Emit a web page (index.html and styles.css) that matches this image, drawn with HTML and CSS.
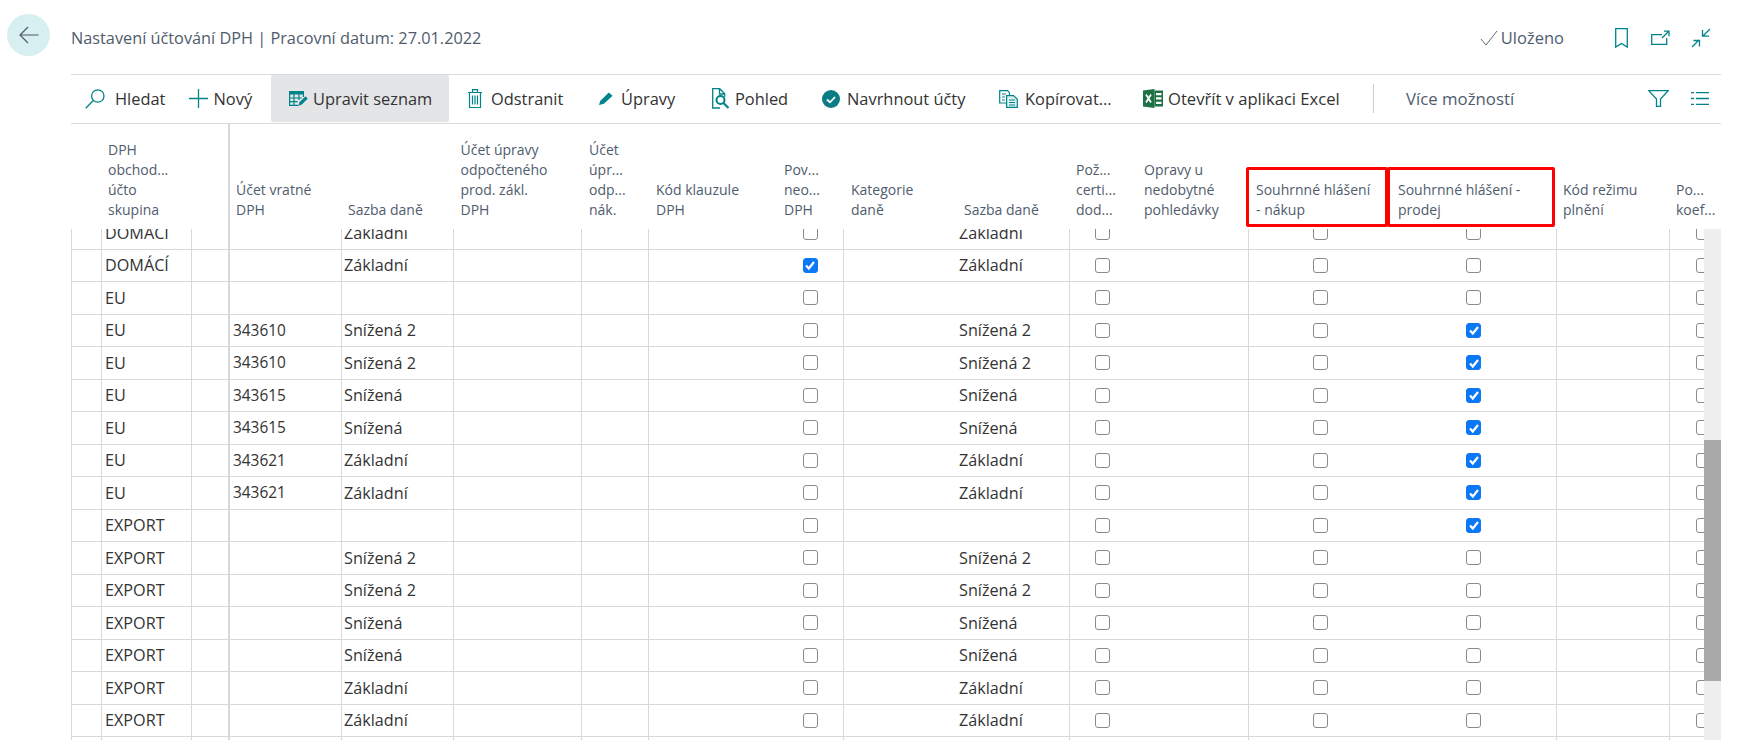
FILE: index.html
```html
<!DOCTYPE html>
<html lang="cs">
<head>
<meta charset="utf-8">
<title>Nastavení účtování DPH</title>
<link rel="stylesheet" href="styles.css">
</head>
<body>
<div class="app">
  <aside class="side">
    <button class="back" type="button" aria-label="Zpět">
      <svg width="20" height="18" viewBox="0 0 20 18"><path d="M19.5 9H1M9 1 1 9l8 8" fill="none" stroke="#4d5b66" stroke-width="1.2"/></svg>
    </button>
  </aside>
  <main class="main">
    <header class="titlebar">
      <div class="title">Nastavení účtování DPH | Pracovní datum: 27.01.2022</div>
      <div class="status">
        <svg width="18" height="16" viewBox="0 0 18 16"><path d="M1 9l5 6L17 1" fill="none" stroke="#5b6b75" stroke-width="1"/></svg>
        <span>Uloženo</span>
      </div>
      <svg class="tb-ic" width="13" height="20" viewBox="0 0 13 20"><path d="M.7.7h11.6v18.4L6.500 15.500.7 19.100z" fill="none" stroke="#00838a" stroke-width="1.300"/></svg>
      <svg class="tb-ic open" width="19" height="15" viewBox="0 0 19 15"><path d="M11 4.700H.7v9.600h15V8M11 8l6-6M13 1.200h5v5" fill="none" stroke="#00838a" stroke-width="1.300"/></svg>
      <svg class="tb-ic collapse" width="20" height="20" viewBox="0 0 20 20"><path d="M1 19l7-7M2.500 12.500H8.500V18.500M19 1l-7 7M11.500 2V8.200H18" fill="none" stroke="#00838a" stroke-width="1.300"/></svg>
    </header>
    <nav class="toolbar">
      <div class="tool t-hledat g10">
        <svg width="20" height="20" viewBox="0 0 20 20"><circle cx="12.800" cy="7" r="6.200" fill="none" stroke="#00838a" stroke-width="1.300"/><path d="M8.300 11.500.7 19.300" stroke="#00838a" stroke-width="1.300"/></svg>
        <span>Hledat</span>
      </div>
      <div class="tool t-novy g6">
        <svg width="19" height="19" viewBox="0 0 19 19"><path d="M9.500 0v19M0 9.500h19" stroke="#00838a" stroke-width="1.300"/></svg>
        <span>Nový</span>
      </div>
      <div class="tool t-upravit active g5">
        <svg width="19" height="15" viewBox="0 0 19 15"><path d="M0 0h15v3.500H0z" fill="#00838a"/><path d="M.6 3v11.400h9M.6 7h12M.6 10.700h8M5 3v11M10 3v6M14.400 3v3" fill="none" stroke="#00838a" stroke-width="1.200"/><path d="M9.500 14.800l1-3.500 6-6 2.300 2.300-6 6z" fill="#00838a"/></svg>
        <span>Upravit seznam</span>
      </div>
      <div class="tool t-odstranit g9">
        <svg width="14" height="19" viewBox="0 0 14 19"><path d="M0 3.500h14M4.500 3.500V.7h5v2.800M1.500 3.500v15h11v-15" fill="none" stroke="#00838a" stroke-width="1.200"/><path d="M4.500 6.500v9M7 6.500v9M9.500 6.500v9" stroke="#00838a" stroke-width="1.200"/></svg>
        <span>Odstranit</span>
      </div>
      <div class="tool t-upravy g8">
        <svg width="14" height="13" viewBox="0 0 14 13"><path d="M0 13l1.200-4L9.800.5l3.800 3.200-8.700 8z" fill="#00838a"/></svg>
        <span>Úpravy</span>
      </div>
      <div class="tool t-pohled g6">
        <svg width="17" height="21" viewBox="0 0 17 21"><path d="M8 20H.7V.7h7l5 5v3M7.500 1v5h5" fill="none" stroke="#00838a" stroke-width="1.300"/><circle cx="8.500" cy="12" r="4" fill="none" stroke="#00838a" stroke-width="2"/><path d="M11.500 15l5 5" stroke="#00838a" stroke-width="2.200"/></svg>
        <span>Pohled</span>
      </div>
      <div class="tool t-navrh g7">
        <svg width="18" height="18" viewBox="0 0 18 18"><circle cx="9" cy="9" r="9" fill="#0a7c84"/><path d="M5 9.500l3 2.800 5-5.300" fill="none" stroke="#fff" stroke-width="1.800"/></svg>
        <span>Navrhnout účty</span>
      </div>
      <div class="tool t-kopir g7">
        <svg width="19" height="18" viewBox="0 0 19 18"><path d="M7 13H.7V.7h7.800l2 2V5" fill="none" stroke="#00838a" stroke-width="1.200"/><path d="M3 4h4M3 7h3M3 10h3" stroke="#00838a" stroke-width="1.200"/><path d="M7.600 5.600h7l3.700 3.700v8H7.600z" fill="#dff3f4" stroke="#00838a" stroke-width="1.200"/><path d="M10 10h6M10 12.500h6M10 15h6" stroke="#00838a" stroke-width="1.200"/></svg>
        <span>Kopírovat...</span>
      </div>
      <div class="tool t-excel g5">
        <svg width="20" height="19" viewBox="0 0 20 19"><path d="M0 1.500 11.500 0v19L0 17.500z" fill="#1e7145"/><path d="M3 5.500l5 8M8 5.500l-5 8" stroke="#fff" stroke-width="1.700"/><path d="M11.500 1.500H20v16h-8.500z" fill="#1e7145"/><path d="M13 4h5.500v2.300H13zM13 8.300h5.500v2.300H13zM13 12.700h5.500V15H13z" fill="#fff"/></svg>
        <span class="xl">Otevřít v aplikaci Excel</span>
      </div>
      <div class="sep"></div>
      <div class="more">Více možností</div>
      <div class="tools-right">
        <svg width="21" height="17" viewBox="0 0 21 17"><path d="M.8.700h19.400l-7.700 8.300v7.300h-4V9z" fill="none" stroke="#00838a" stroke-width="1.300"/></svg>
        <svg width="18" height="13" viewBox="0 0 18 13"><path d="M5 .7h13M5 6.500h13M5 12.300h13M0 .7h3M0 6.500h3M0 12.300h3" stroke="#00838a" stroke-width="1.300"/></svg>
      </div>
    </nav>
    <section class="grid-head">
      <div class="hc"></div>
      <div class="hc hc-d">DPH<br>obchod...<br>účto<br>skupina</div>
      <div class="hc"></div>
      <div class="hc thick">Účet vratné<br>DPH</div>
      <div class="hc">Sazba daně</div>
      <div class="hc">Účet úpravy<br>odpočteného<br>prod. zákl.<br>DPH</div>
      <div class="hc">Účet<br>úpr...<br>odp...<br>nák.</div>
      <div class="hc">Kód klauzule<br>DPH</div>
      <div class="hc">Pov...<br>neo...<br>DPH</div>
      <div class="hc">Kategorie<br>daně</div>
      <div class="hc">Sazba daně</div>
      <div class="hc">Pož...<br>certi...<br>dod...</div>
      <div class="hc">Opravy u<br>nedobytné<br>pohledávky</div>
      <div class="hc hc-s">Souhrnné hlášení<br>- nákup</div>
      <div class="hc">Souhrnné hlášení -<br>prodej</div>
      <div class="hc">Kód režimu<br>plnění</div>
      <div class="hc">Po...<br>koef...</div>
      <div class="mark mark-a"></div>
      <div class="mark mark-b"></div>
    </section>
    <section class="grid-wrap">
      <div class="grid-body">
        <div class="row"><div class="c"></div><div class="c l g">DOMÁCÍ</div><div class="c l"></div><div class="c t"></div><div class="c l">Základní</div><div class="c l"></div><div class="c l"></div><div class="c l"></div><div class="c m"><input type="checkbox"></div><div class="c l"></div><div class="c">Základní</div><div class="c lm"><input type="checkbox"></div><div class="c"></div><div class="c lm"><input type="checkbox"></div><div class="c m"><input type="checkbox"></div><div class="c l"></div><div class="c lm"><input type="checkbox"></div></div>
        <div class="row"><div class="c"></div><div class="c l g">DOMÁCÍ</div><div class="c l"></div><div class="c t"></div><div class="c l">Základní</div><div class="c l"></div><div class="c l"></div><div class="c l"></div><div class="c m"><input type="checkbox" checked></div><div class="c l"></div><div class="c">Základní</div><div class="c lm"><input type="checkbox"></div><div class="c"></div><div class="c lm"><input type="checkbox"></div><div class="c m"><input type="checkbox"></div><div class="c l"></div><div class="c lm"><input type="checkbox"></div></div>
        <div class="row"><div class="c"></div><div class="c l g">EU</div><div class="c l"></div><div class="c t"></div><div class="c l"></div><div class="c l"></div><div class="c l"></div><div class="c l"></div><div class="c m"><input type="checkbox"></div><div class="c l"></div><div class="c"></div><div class="c lm"><input type="checkbox"></div><div class="c"></div><div class="c lm"><input type="checkbox"></div><div class="c m"><input type="checkbox"></div><div class="c l"></div><div class="c lm"><input type="checkbox"></div></div>
        <div class="row"><div class="c"></div><div class="c l g">EU</div><div class="c l"></div><div class="c t num">343610</div><div class="c l">Snížená 2</div><div class="c l"></div><div class="c l"></div><div class="c l"></div><div class="c m"><input type="checkbox"></div><div class="c l"></div><div class="c">Snížená 2</div><div class="c lm"><input type="checkbox"></div><div class="c"></div><div class="c lm"><input type="checkbox"></div><div class="c m"><input type="checkbox" checked></div><div class="c l"></div><div class="c lm"><input type="checkbox"></div></div>
        <div class="row"><div class="c"></div><div class="c l g">EU</div><div class="c l"></div><div class="c t num">343610</div><div class="c l">Snížená 2</div><div class="c l"></div><div class="c l"></div><div class="c l"></div><div class="c m"><input type="checkbox"></div><div class="c l"></div><div class="c">Snížená 2</div><div class="c lm"><input type="checkbox"></div><div class="c"></div><div class="c lm"><input type="checkbox"></div><div class="c m"><input type="checkbox" checked></div><div class="c l"></div><div class="c lm"><input type="checkbox"></div></div>
        <div class="row"><div class="c"></div><div class="c l g">EU</div><div class="c l"></div><div class="c t num">343615</div><div class="c l">Snížená</div><div class="c l"></div><div class="c l"></div><div class="c l"></div><div class="c m"><input type="checkbox"></div><div class="c l"></div><div class="c">Snížená</div><div class="c lm"><input type="checkbox"></div><div class="c"></div><div class="c lm"><input type="checkbox"></div><div class="c m"><input type="checkbox" checked></div><div class="c l"></div><div class="c lm"><input type="checkbox"></div></div>
        <div class="row"><div class="c"></div><div class="c l g">EU</div><div class="c l"></div><div class="c t num">343615</div><div class="c l">Snížená</div><div class="c l"></div><div class="c l"></div><div class="c l"></div><div class="c m"><input type="checkbox"></div><div class="c l"></div><div class="c">Snížená</div><div class="c lm"><input type="checkbox"></div><div class="c"></div><div class="c lm"><input type="checkbox"></div><div class="c m"><input type="checkbox" checked></div><div class="c l"></div><div class="c lm"><input type="checkbox"></div></div>
        <div class="row"><div class="c"></div><div class="c l g">EU</div><div class="c l"></div><div class="c t num">343621</div><div class="c l">Základní</div><div class="c l"></div><div class="c l"></div><div class="c l"></div><div class="c m"><input type="checkbox"></div><div class="c l"></div><div class="c">Základní</div><div class="c lm"><input type="checkbox"></div><div class="c"></div><div class="c lm"><input type="checkbox"></div><div class="c m"><input type="checkbox" checked></div><div class="c l"></div><div class="c lm"><input type="checkbox"></div></div>
        <div class="row"><div class="c"></div><div class="c l g">EU</div><div class="c l"></div><div class="c t num">343621</div><div class="c l">Základní</div><div class="c l"></div><div class="c l"></div><div class="c l"></div><div class="c m"><input type="checkbox"></div><div class="c l"></div><div class="c">Základní</div><div class="c lm"><input type="checkbox"></div><div class="c"></div><div class="c lm"><input type="checkbox"></div><div class="c m"><input type="checkbox" checked></div><div class="c l"></div><div class="c lm"><input type="checkbox"></div></div>
        <div class="row"><div class="c"></div><div class="c l g">EXPORT</div><div class="c l"></div><div class="c t"></div><div class="c l"></div><div class="c l"></div><div class="c l"></div><div class="c l"></div><div class="c m"><input type="checkbox"></div><div class="c l"></div><div class="c"></div><div class="c lm"><input type="checkbox"></div><div class="c"></div><div class="c lm"><input type="checkbox"></div><div class="c m"><input type="checkbox" checked></div><div class="c l"></div><div class="c lm"><input type="checkbox"></div></div>
        <div class="row"><div class="c"></div><div class="c l g">EXPORT</div><div class="c l"></div><div class="c t"></div><div class="c l">Snížená 2</div><div class="c l"></div><div class="c l"></div><div class="c l"></div><div class="c m"><input type="checkbox"></div><div class="c l"></div><div class="c">Snížená 2</div><div class="c lm"><input type="checkbox"></div><div class="c"></div><div class="c lm"><input type="checkbox"></div><div class="c m"><input type="checkbox"></div><div class="c l"></div><div class="c lm"><input type="checkbox"></div></div>
        <div class="row"><div class="c"></div><div class="c l g">EXPORT</div><div class="c l"></div><div class="c t"></div><div class="c l">Snížená 2</div><div class="c l"></div><div class="c l"></div><div class="c l"></div><div class="c m"><input type="checkbox"></div><div class="c l"></div><div class="c">Snížená 2</div><div class="c lm"><input type="checkbox"></div><div class="c"></div><div class="c lm"><input type="checkbox"></div><div class="c m"><input type="checkbox"></div><div class="c l"></div><div class="c lm"><input type="checkbox"></div></div>
        <div class="row"><div class="c"></div><div class="c l g">EXPORT</div><div class="c l"></div><div class="c t"></div><div class="c l">Snížená</div><div class="c l"></div><div class="c l"></div><div class="c l"></div><div class="c m"><input type="checkbox"></div><div class="c l"></div><div class="c">Snížená</div><div class="c lm"><input type="checkbox"></div><div class="c"></div><div class="c lm"><input type="checkbox"></div><div class="c m"><input type="checkbox"></div><div class="c l"></div><div class="c lm"><input type="checkbox"></div></div>
        <div class="row"><div class="c"></div><div class="c l g">EXPORT</div><div class="c l"></div><div class="c t"></div><div class="c l">Snížená</div><div class="c l"></div><div class="c l"></div><div class="c l"></div><div class="c m"><input type="checkbox"></div><div class="c l"></div><div class="c">Snížená</div><div class="c lm"><input type="checkbox"></div><div class="c"></div><div class="c lm"><input type="checkbox"></div><div class="c m"><input type="checkbox"></div><div class="c l"></div><div class="c lm"><input type="checkbox"></div></div>
        <div class="row"><div class="c"></div><div class="c l g">EXPORT</div><div class="c l"></div><div class="c t"></div><div class="c l">Základní</div><div class="c l"></div><div class="c l"></div><div class="c l"></div><div class="c m"><input type="checkbox"></div><div class="c l"></div><div class="c">Základní</div><div class="c lm"><input type="checkbox"></div><div class="c"></div><div class="c lm"><input type="checkbox"></div><div class="c m"><input type="checkbox"></div><div class="c l"></div><div class="c lm"><input type="checkbox"></div></div>
        <div class="row"><div class="c"></div><div class="c l g">EXPORT</div><div class="c l"></div><div class="c t"></div><div class="c l">Základní</div><div class="c l"></div><div class="c l"></div><div class="c l"></div><div class="c m"><input type="checkbox"></div><div class="c l"></div><div class="c">Základní</div><div class="c lm"><input type="checkbox"></div><div class="c"></div><div class="c lm"><input type="checkbox"></div><div class="c m"><input type="checkbox"></div><div class="c l"></div><div class="c lm"><input type="checkbox"></div></div>
        <div class="row"><div class="c"></div><div class="c l"></div><div class="c l"></div><div class="c t"></div><div class="c l"></div><div class="c l"></div><div class="c l"></div><div class="c l"></div><div class="c m"></div><div class="c l"></div><div class="c"></div><div class="c lm"></div><div class="c"></div><div class="c lm"></div><div class="c m"></div><div class="c l"></div><div class="c lm"></div></div>
      </div>
      <div class="scrollbar"><div class="thumb"></div></div>
    </section>
  </main>
</div>
</body>
</html>
```
FILE: styles.css
```css
* { box-sizing: border-box; }
html, body { margin: 0; height: 100%; background: #fff; overflow: hidden; }
body { font-family: "Open Sans", "Noto Sans", "Liberation Sans", sans-serif; color: #333; }

.app { display: grid; grid-template-columns: 71px 1650px; height: 740px; }
.side { padding: 14px 0 0 7px; }
.back {
  display: flex; align-items: center; justify-content: center;
  width: 43px; height: 42px; padding: 0; border: 0; border-radius: 50%;
  background: #d8eff1;
}
.main { display: flex; flex-direction: column; height: 740px; min-width: 0; }

.titlebar {
  display: flex; align-items: center; flex: none;
  height: 75px; padding-top: 1px; border-bottom: 1px solid #d8dade;
}
.title { font-size: 16.3px; color: #505c6d; }
.status { display: flex; align-items: center; margin-left: auto; gap: 3px; font-size: 16.5px; color: #505c6d; }
.tb-ic { flex: none; margin-left: 51px; margin-top: 1px; }
.tb-ic.open { margin-left: 23px; margin-top: -1px; }
.tb-ic.collapse { margin-left: 21px; margin-right: 10px; margin-top: 1px; }

.toolbar {
  display: flex; align-items: center; flex: none;
  height: 49px; padding-bottom: 1px; border-bottom: 1px solid #d8dade;
  font-size: 16.4px;
}
.tool { display: flex; align-items: center; height: 47px; flex: none; white-space: nowrap; color: #333; }
.tool svg { flex: none; }
.xl { font-size: 16.6px; }
.g5 { gap: 5px; } .g6 { gap: 6px; } .g7 { gap: 7px; } .g8 { gap: 8px; } .g9 { gap: 9px; } .g10 { gap: 10px; }
.t-hledat { width: 117.5px; padding-left: 14px; }
.t-novy { width: 82.5px; }
.t-upravit { width: 177.5px; padding-left: 18px; }
.t-odstranit { width: 131px; margin-left: 19.5px; }
.t-upravy { width: 112px; }
.t-pohled { width: 111px; padding-left: 1px; }
.t-navrh { width: 177px; }
.t-kopir { width: 144px; }
.t-excel { width: 230px; }
.active { background: #e4e5e7; border-radius: 2px; }
.sep { width: 1px; height: 29px; background: #c9ccd0; flex: none; }
.more { margin-left: 32px; font-size: 16.8px; color: #505c6d; }
.tools-right { display: flex; align-items: center; gap: 22px; margin-left: auto; padding-right: 12px; }

.grid-head {
  display: grid;
  grid-template-columns: 31px 89px 38px 112px 112.5px 128.5px 67px 128px 67px 113px 112px 68px 111px 143px 165px 113px 68px;
  position: relative; flex: none; height: 105px; width: 1650px; overflow: hidden;
  font-size: 14px; line-height: 20px; color: #505c6d;
}
.row {
  display: grid;
  grid-template-columns: 30px 90px 37px 113px 112px 128px 67px 129px 66px 114px 112px 66px 113px 143px 165px 113px 68px;
}
.hc { align-self: end; padding: 0 0 9px 7px; white-space: nowrap; }
.hc-s { padding-left: 8px; }
.hc-d { padding-left: 6px; }
.hc.thick { align-self: stretch; display: flex; align-items: flex-end; margin-left: -1px; border-left: 2px solid #d5d8dc; padding-left: 6px; }
.mark { position: absolute; top: 43px; height: 60px; border: 3px solid #f00; border-radius: 2px; }
.mark-a { left: 1175px; width: 142px; }
.mark-b { left: 1316px; width: 168px; }

.grid-wrap { display: flex; flex: 1; min-height: 0; }
.grid-body { flex: 1; min-width: 0; overflow: hidden; }
.row { height: 32.5px; width: 1666px; font-size: 16.2px; color: #333; border-bottom: 1px solid #d5d8dc; }
.row:first-child { margin-top: -12px; }
.c { display: flex; align-items: center; padding-left: 2px; white-space: nowrap; min-width: 0; }
.c:first-child { border-left: 1px solid #d5d8dc; }
.l, .lm { border-left: 1px solid #d5d8dc; }
.c.g { padding-left: 3px; }
.t { border-left: 2px solid #d5d8dc; }
.num { font-size: 15.4px; padding-left: 3px; }
.m, .lm { justify-content: center; padding-left: 0; }
input[type="checkbox"] {
  appearance: none; width: 15px; height: 15px; margin: 0; flex: none;
  border: 1.5px solid #8a8a8a; border-radius: 3px; background: #fff;
}
input[type="checkbox"]:checked {
  border-color: #0b78f5; background: #0b78f5 url("data:image/svg+xml,%3Csvg xmlns='http://www.w3.org/2000/svg' viewBox='0 0 12 12'%3E%3Cpath d='M2 6.500l2.800 3L10 3' fill='none' stroke='%23fff' stroke-width='2.200'/%3E%3C/svg%3E") center/12px no-repeat;
}
.scrollbar { flex: none; width: 17px; background: #eee; }
.thumb { height: 241px; margin-top: 211px; background: #a9a9a9; }
```
